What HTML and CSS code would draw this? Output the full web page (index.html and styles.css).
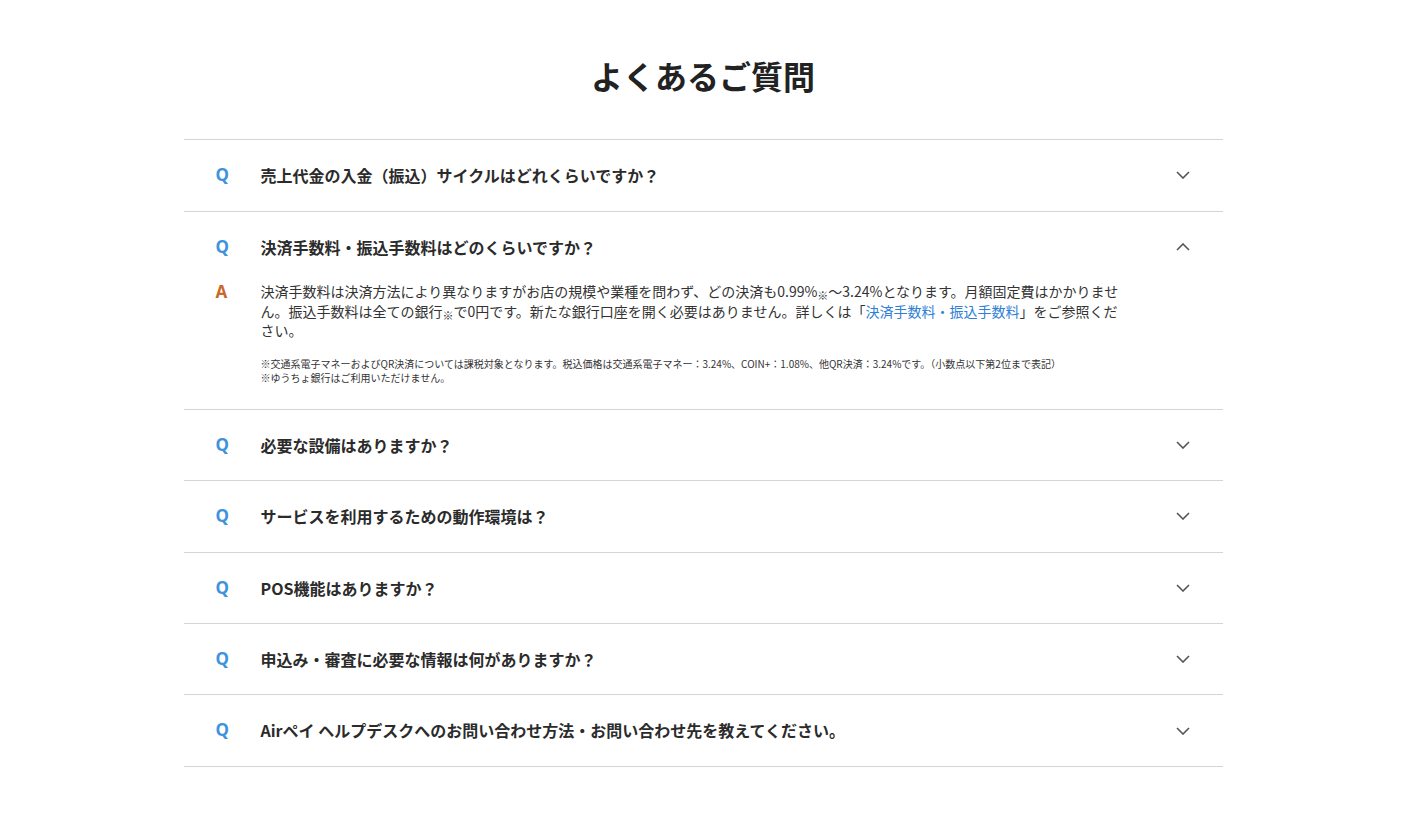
FILE: index.html
```html
<!DOCTYPE html>
<html lang="ja">
<head>
<meta charset="utf-8">
<title>よくあるご質問</title>
<link rel="stylesheet" href="styles.css">
</head>
<body>
<section class="faq">
  <h2 class="faq-title">よくあるご質問</h2>
  <ul class="faq-list">
    <li class="faq-item">
      <div class="faq-q"><span class="mark-q">Q</span><span class="q-text">売上代金の入金（振込）サイクルはどれくらいですか？</span><svg class="chev" viewBox="0 0 14 8"><path d="M1 1l6 6 6-6"/></svg></div>
    </li>
    <li class="faq-item open">
      <div class="faq-q"><span class="mark-q">Q</span><span class="q-text">決済手数料・振込手数料はどのくらいですか？</span><svg class="chev" viewBox="0 0 14 8"><path d="M1 7l6-6 6 6"/></svg></div>
      <div class="faq-a">
        <span class="mark-a">A</span>
        <div class="a-body">
          <p class="a-text">決済手数料は決済方法により異なりますがお店の規模や業種を問わず、どの決済も0.99%<span class="kome">※</span>〜3.24%となります。月額固定費はかかりません。振込手数料は全ての銀行<span class="kome">※</span>で0円です。新たな銀行口座を開く必要はありません。詳しくは「<a class="link" href="#">決済手数料・振込手数料</a>」をご参照ください。</p>
          <p class="a-note">※交通系電子マネーおよびQR決済については課税対象となります。税込価格は交通系電子マネー：3.24%、COIN+：1.08%、他QR決済：3.24%です。（小数点以下第2位まで表記）<br>※ゆうちょ銀行はご利用いただけません。</p>
        </div>
      </div>
    </li>
    <li class="faq-item">
      <div class="faq-q"><span class="mark-q">Q</span><span class="q-text">必要な設備はありますか？</span><svg class="chev" viewBox="0 0 14 8"><path d="M1 1l6 6 6-6"/></svg></div>
    </li>
    <li class="faq-item">
      <div class="faq-q"><span class="mark-q">Q</span><span class="q-text">サービスを利用するための動作環境は？</span><svg class="chev" viewBox="0 0 14 8"><path d="M1 1l6 6 6-6"/></svg></div>
    </li>
    <li class="faq-item">
      <div class="faq-q"><span class="mark-q">Q</span><span class="q-text">POS機能はありますか？</span><svg class="chev" viewBox="0 0 14 8"><path d="M1 1l6 6 6-6"/></svg></div>
    </li>
    <li class="faq-item">
      <div class="faq-q"><span class="mark-q">Q</span><span class="q-text">申込み・審査に必要な情報は何がありますか？</span><svg class="chev" viewBox="0 0 14 8"><path d="M1 1l6 6 6-6"/></svg></div>
    </li>
    <li class="faq-item">
      <div class="faq-q"><span class="mark-q">Q</span><span class="q-text">Airペイ ヘルプデスクへのお問い合わせ方法・お問い合わせ先を教えてください。</span><svg class="chev" viewBox="0 0 14 8"><path d="M1 1l6 6 6-6"/></svg></div>
    </li>
  </ul>
</section>
</body>
</html>
```
FILE: styles.css
```css
html, body {
  margin: 0;
  padding: 0;
  background: #fff;
}
body {
  font-family: "Noto Sans CJK JP", "Noto Sans", sans-serif;
  color: #333;
}
.faq {
  width: 1039px;
  margin: 0 auto;
  padding-top: 52.5px;
}
.faq-title {
  margin: 0 0 42px;
  text-align: center;
  font-size: 32px;
  line-height: 1.4;
  font-weight: 700;
  color: #222;
}
.faq-list {
  list-style: none;
  margin: 0;
  padding: 0;
  border-top: 1px solid #d4d4d4;
}
.faq-item {
  border-bottom: 1px solid #d4d4d4;
}
.faq-q {
  display: flex;
  align-items: center;
  padding: 24px 33px 24px 32px;
  font-size: 16px;
  line-height: 22.4px;
  height: 22.4px;
  font-weight: 700;
}
.mark-q {
  width: 45px;
  flex: none;
  color: #3f93dc;
  font-family: "Noto Sans", sans-serif;
  font-weight: 700;
  font-size: 17px;
}
.q-text {
  flex: 1;
  color: #2b2b2b;
}
.chev {
  width: 14px;
  height: 8px;
  flex: none;
  fill: none;
  stroke: #555;
  stroke-width: 1.6;
}
.faq-a {
  display: flex;
  padding: 0 98px 24px 32px;
}
.mark-a {
  width: 45px;
  flex: none;
  color: #c96a2a;
  font-family: "Noto Sans", sans-serif;
  font-weight: 700;
  font-size: 17px;
  line-height: 19.6px;
}
.a-body {
  flex: 1;
}
.a-text {
  margin: 0;
  font-size: 14px;
  line-height: 19.6px;
  color: #333;
}
.kome {
  font-size: 11px;
  line-height: 1;
  position: relative;
  top: 3px;
}
.link {
  color: #2f7fd4;
  text-decoration: none;
}
.a-note {
  margin: 16px 0 0;
  font-size: 10px;
  line-height: 14px;
  color: #333;
}
```
